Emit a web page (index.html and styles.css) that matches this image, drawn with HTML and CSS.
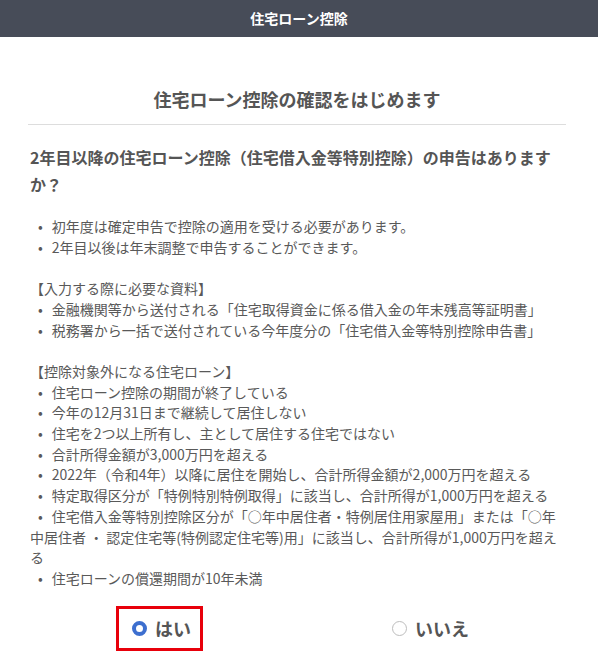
FILE: index.html
```html
<!DOCTYPE html>
<html lang="ja">
<head>
  <meta charset="UTF-8">
  <title>住宅ローン控除</title>
  <link rel="stylesheet" href="styles.css">
</head>
<body>

  <!-- Top bar -->
  <header class="topbar">住宅ローン控除</header>

  <main class="content">
    <h1 class="page-title">住宅ローン控除の確認をはじめます</h1>

    <h2 class="question">2年目以降の住宅ローン控除（住宅借入金等特別控除）の申告はありますか？</h2>

    <!-- Notes -->
    <div class="notes">
      <div class="group">
        <p class="line"><span class="dot">•</span>初年度は確定申告で控除の適用を受ける必要があります。</p>
        <p class="line"><span class="dot">•</span>2年目以後は年末調整で申告することができます。</p>
      </div>
      <div class="group">
        <p class="line">【入力する際に必要な資料】</p>
        <p class="line"><span class="dot">•</span>金融機関等から送付される「住宅取得資金に係る借入金の年末残高等証明書」</p>
        <p class="line"><span class="dot">•</span>税務署から一括で送付されている今年度分の「住宅借入金等特別控除申告書」</p>
      </div>
      <div class="group">
        <p class="line">【控除対象外になる住宅ローン】</p>
        <p class="line"><span class="dot">•</span>住宅ローン控除の期間が終了している</p>
        <p class="line"><span class="dot">•</span>今年の12月31日まで継続して居住しない</p>
        <p class="line"><span class="dot">•</span>住宅を2つ以上所有し、主として居住する住宅ではない</p>
        <p class="line"><span class="dot">•</span>合計所得金額が3,000万円を超える</p>
        <p class="line"><span class="dot">•</span>2022年（令和4年）以降に居住を開始し、合計所得金額が2,000万円を超える</p>
        <p class="line"><span class="dot">•</span>特定取得区分が「特例特別特例取得」に該当し、合計所得が1,000万円を超える</p>
        <p class="line"><span class="dot">•</span>住宅借入金等特別控除区分が「○年中居住者・特例居住用家屋用」または「○年中居住者 ・ 認定住宅等(特例認定住宅等)用」に該当し、合計所得が1,000万円を超える</p>
        <p class="line"><span class="dot">•</span>住宅ローンの償還期間が10年未満</p>
      </div>
    </div>

    <!-- Answer -->
    <div class="choices">
      <div class="choice-cell">
        <label class="choice selected">
          <input type="radio" name="answer" checked>
          <span class="radio"></span>
          <span class="choice-text">はい</span>
        </label>
      </div>
      <div class="choice-cell">
        <label class="choice">
          <input type="radio" name="answer">
          <span class="radio"></span>
          <span class="choice-text">いいえ</span>
        </label>
      </div>
    </div>
  </main>

</body>
</html>
```

FILE: styles.css
```css
body {
  margin: 0;
  padding: 0;
  background-color: #ffffff;
  color: #555555;
  font-family: 'Noto Sans CJK JP', 'Noto Sans', sans-serif;
}

.topbar {
  height: 37px;
  line-height: 37px;
  background-color: #474c58;
  color: #ffffff;
  font-size: 14px;
  font-weight: bold;
  text-align: center;
}

.content {
  padding: 0 32px 0 28px;
}

.page-title {
  margin: 49px 0 0;
  padding-bottom: 11px;
  border-bottom: 1px solid #dddddd;
  font-size: 18px;
  font-weight: bold;
  line-height: 27px;
  text-align: center;
  color: #555555;
}

.question {
  margin: 19px 0 0;
  padding-left: 2px;
  font-size: 16px;
  font-weight: bold;
  line-height: 27px;
  color: #555555;
}

.notes {
  margin-top: 18px;
  padding-left: 2px;
  font-size: 14px;
  line-height: 20.7px;
  color: #595959;
}

.group {
  margin-bottom: 20.7px;
}

.group:last-child {
  margin-bottom: 0;
}

.line {
  margin: 0;
}

.dot {
  margin: 0 9px 0 8px;
}

.choices {
  display: grid;
  grid-template-columns: 1fr 1fr;
  margin-top: 17px;
}

.choice-cell {
  display: flex;
  justify-content: center;
  padding-right: 6px;
}

.choice {
  display: inline-flex;
  align-items: center;
  gap: 8px;
  height: 39px;
  padding: 0 9px 0 13px;
  border: 3px solid transparent;
  cursor: pointer;
}

.choice.selected {
  border-color: #e8000b;
}

.choice input {
  display: none;
}

.radio {
  flex-shrink: 0;
  width: 15px;
  height: 15px;
  box-sizing: border-box;
  border-radius: 50%;
  border: 1.5px solid #bdbdbd;
  background-color: #ffffff;
}

.choice input:checked + .radio {
  border: 4.5px solid #3d6fcf;
}

.choice-text {
  font-size: 18px;
  font-weight: bold;
  color: #555555;
}
```
